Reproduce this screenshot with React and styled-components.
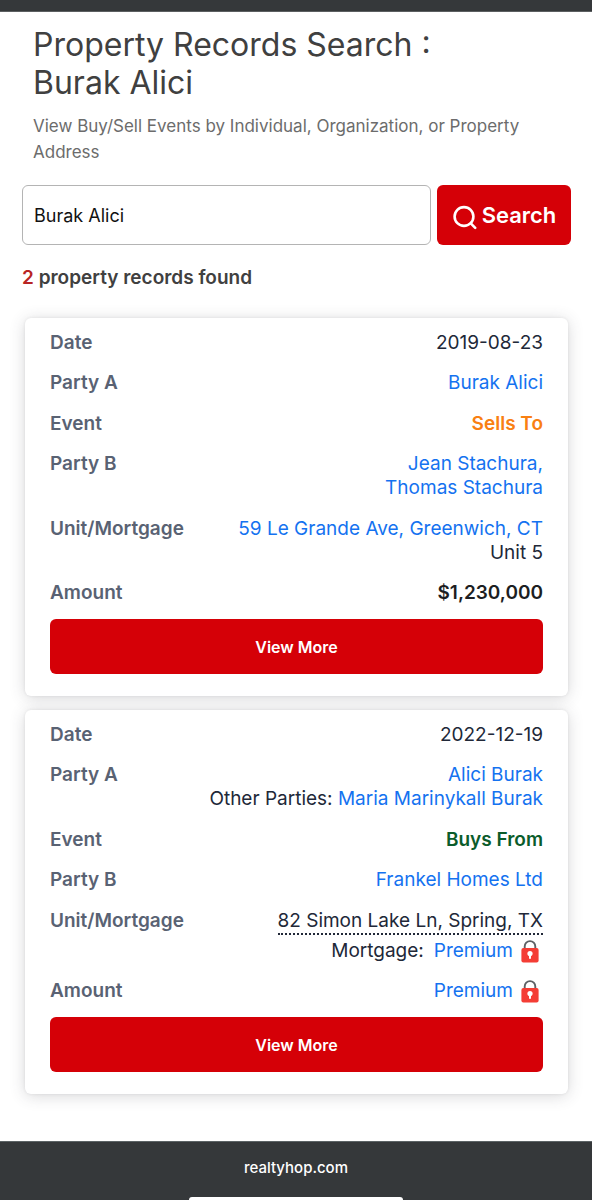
import React, { useState } from "react";
import styled, { createGlobalStyle } from "styled-components";

const GlobalStyle = createGlobalStyle`
  *, *::before, *::after { box-sizing: border-box; }
  body {
    margin: 0;
    background: #fff;
    color: #212838;
    font-family: Inter, "Liberation Sans", sans-serif;
    font-size: 19px;
    line-height: 24px;
  }
  button, input { font-family: inherit; }
`;

const Page = styled.div`
  display: flex;
  flex-direction: column;
  min-height: 100vh;
`;

const TopBar = styled.div`
  height: 12px;
  background: #35383a;
  border-bottom: 1px solid #5c5f61;
`;

const Main = styled.main`
  flex: 1;
  padding: 14px 21px 44px 22px;
`;

const Heading = styled.header`
  padding: 0 11px;
`;

const Title = styled.h1`
  margin: 0;
  max-width: 440px;
  font-size: 32px;
  line-height: 38px;
  font-weight: 400;
  color: #404040;
`;

const Subtitle = styled.p`
  margin: 11px 0 0;
  font-size: 17px;
  line-height: 26px;
  color: #6c6c6c;
`;

const SearchForm = styled.form`
  display: flex;
  gap: 6px;
  margin-top: 20px;
`;

const SearchInput = styled.input`
  flex: 1;
  min-width: 0;
  height: 60px;
  padding: 0 11px;
  border: 1px solid #b4b4b4;
  border-radius: 6px;
  background: #fff;
  color: #111;
  font-size: 18px;
`;

const SearchButton = styled.button`
  display: flex;
  align-items: center;
  justify-content: center;
  gap: 5px;
  width: 134px;
  height: 60px;
  padding: 0;
  border: 0;
  border-radius: 6px;
  background: #d50007;
  color: #fff;
  font-size: 22px;
  font-weight: 600;

  svg { margin-top: 4px; }
`;

const ResultCount = styled.h2`
  margin: 21px 0 0;
  font-size: 19px;
  line-height: 24px;
  font-weight: 600;
  color: #404040;
`;

const Count = styled.span`
  color: #b82424;
`;

const CardList = styled.div`
  display: flex;
  flex-direction: column;
  gap: 14px;
  margin-top: 28px;
  padding: 0 3px;
`;

const Card = styled.article`
  padding: 5px 25px 22px;
  border-radius: 6px;
  background: #fff;
  box-shadow: 0 2px 16px rgba(60, 62, 70, 0.2), 0 0 3px rgba(60, 62, 70, 0.1);
`;

const Fields = styled.dl`
  margin: 0;
`;

const Row = styled.div`
  display: flex;
  justify-content: space-between;
  gap: 16px;
  padding: 8px 0;

  &:nth-child(even) { padding-bottom: 9px; }
`;

const Label = styled.dt`
  flex: none;
  font-weight: 600;
  color: #596273;
`;

const Value = styled.dd`
  margin: 0;
  text-align: right;
  font-weight: ${(p) => (p.$strong ? 600 : 400)};
  color: ${(p) => p.$color || "inherit"};
`;

const Line = styled.div`
  display: flex;
  align-items: center;
  justify-content: flex-end;
  gap: 10px;
  margin-top: ${(p) => (p.$spaced ? "4px" : "0")};
`;

const Link = styled.a`
  color: #1472f0;
  text-decoration: none;
`;

const Address = styled.span`
  display: inline-block;
  border-bottom: 2px dotted #212838;
`;

const PremiumLink = styled(Link)`
  display: flex;
  align-items: center;
  gap: 8px;
  padding-right: 4px;
`;

const ViewMore = styled.button`
  display: block;
  width: 100%;
  height: 55px;
  margin-top: 5px;
  padding: 0;
  border: 0;
  border-radius: 6px;
  background: #d50007;
  color: #fff;
  font-size: 16px;
  font-weight: 600;
`;

const Footer = styled.footer`
  display: flex;
  flex-direction: column;
  align-items: center;
  background: #35383a;
  border-top: 1px solid #5c6365;
`;

const Site = styled.div`
  padding: 14px 0 17px;
  color: #fff;
  font-size: 15px;
  font-weight: 500;
  line-height: 24px;
`;

const HomeIndicator = styled.div`
  width: 36%;
  height: 3px;
  border-radius: 3px 3px 0 0;
  background: #fff;
`;

function SearchIcon() {
  return (
    <svg width="25" height="25" viewBox="0 0 25 25" fill="none" stroke="#fff" strokeWidth="2.6" strokeLinecap="round" aria-hidden="true">
      <circle cx="12" cy="11.5" r="9.4" />
      <path d="M18.8 18.4 L23.2 22.8" />
    </svg>
  );
}

function LockIcon() {
  return (
    <svg width="18" height="23" viewBox="0 0 18 23" aria-hidden="true">
      <path d="M3.7 9 V6.4 A5.3 5.3 0 0 1 14.3 6.4 V9" fill="none" stroke="#5d6165" strokeWidth="1.9" />
      <rect x="0.4" y="8" width="17.2" height="14.6" rx="2" fill="#f43d35" />
      <circle cx="9" cy="13.6" r="2.6" fill="#fff" />
      <path d="M8 14.5 h2 v4.2 h-2 z" fill="#fff" />
    </svg>
  );
}

function Premium() {
  return (
    <PremiumLink href="#premium">
      Premium
      <LockIcon />
    </PremiumLink>
  );
}

function Field({ label, children, color, strong }) {
  return (
    <Row>
      <Label>{label}</Label>
      <Value $color={color} $strong={strong}>{children}</Value>
    </Row>
  );
}

export default function App() {
  const [query, setQuery] = useState("Burak Alici");
  return (
    <>
      <GlobalStyle />
      <Page>
        <TopBar />
        <Main>
          <Heading>
            <Title>Property Records Search : Burak Alici</Title>
            <Subtitle>View Buy/Sell Events by Individual, Organization, or Property Address</Subtitle>
          </Heading>
          <SearchForm onSubmit={(e) => e.preventDefault()}>
            <SearchInput aria-label="Name or address" value={query} onChange={(e) => setQuery(e.target.value)} />
            <SearchButton type="submit">
              <SearchIcon />
              Search
            </SearchButton>
          </SearchForm>
          <ResultCount><Count>2</Count> property records found</ResultCount>
          <CardList>
            <Card>
              <Fields>
                <Field label="Date">2019-08-23</Field>
                <Field label="Party A"><Link href="#burak-alici">Burak Alici</Link></Field>
                <Field label="Event" color="#f98012" strong>Sells To</Field>
                <Field label="Party B">
                  <Link href="#jean-stachura">Jean Stachura,</Link>
                  <br />
                  <Link href="#thomas-stachura">Thomas Stachura</Link>
                </Field>
                <Field label="Unit/Mortgage">
                  <Link href="#le-grande">59 Le Grande Ave, Greenwich, CT</Link>
                  <br />
                  Unit 5
                </Field>
                <Field label="Amount" color="#1c1e22" strong>$1,230,000</Field>
              </Fields>
              <ViewMore type="button">View More</ViewMore>
            </Card>
            <Card>
              <Fields>
                <Field label="Date">2022-12-19</Field>
                <Field label="Party A">
                  <Link href="#alici-burak">Alici Burak</Link>
                  <br />
                  Other Parties: <Link href="#maria">Maria Marinykall Burak</Link>
                </Field>
                <Field label="Event" color="#0b5c2b" strong>Buys From</Field>
                <Field label="Party B"><Link href="#frankel">Frankel Homes Ltd</Link></Field>
                <Field label="Unit/Mortgage">
                  <Address>82 Simon Lake Ln, Spring, TX</Address>
                  <Line $spaced>Mortgage: <Premium /></Line>
                </Field>
                <Field label="Amount"><Line><Premium /></Line></Field>
              </Fields>
              <ViewMore type="button">View More</ViewMore>
            </Card>
          </CardList>
        </Main>
        <Footer>
          <Site>realtyhop.com</Site>
          <HomeIndicator />
        </Footer>
      </Page>
    </>
  );
}
